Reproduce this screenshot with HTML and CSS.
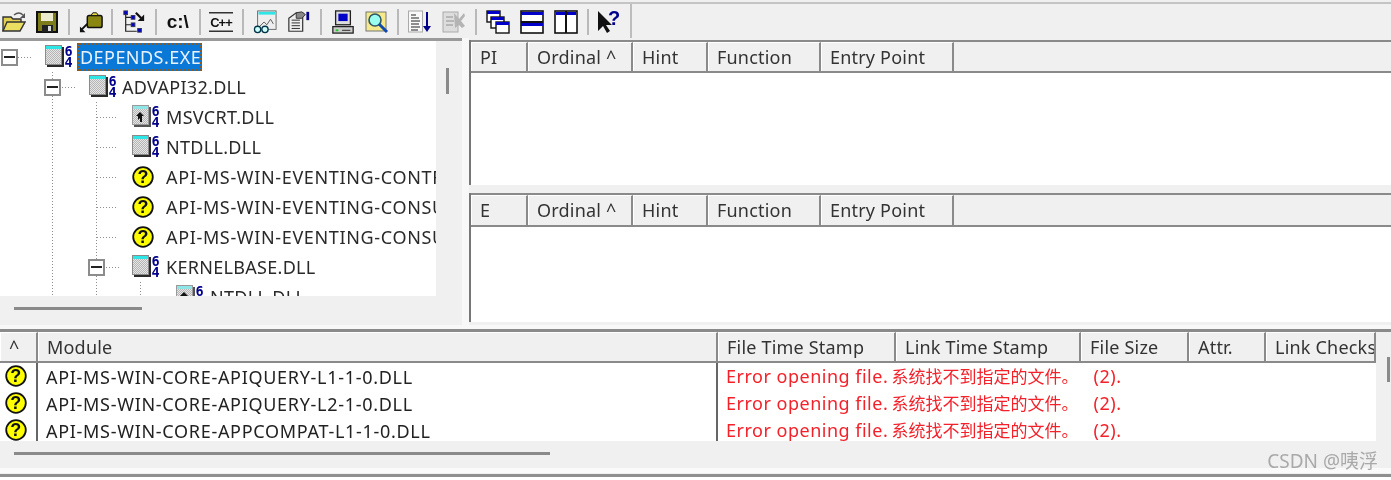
FILE: index.html
```html
<!DOCTYPE html>
<html lang="en">
<head>
<meta charset="utf-8">
<title>Dependency Walker</title>
<link rel="stylesheet" href="styles.css">
</head>
<body>
<svg class="defs" width="0" height="0">
  <defs>
    <pattern id="dither" width="2" height="2" patternUnits="userSpaceOnUse">
      <rect width="2" height="2" fill="#e6e6e6"/>
      <rect width="1" height="1" fill="#b4b4b4"/>
      <rect x="1" y="1" width="1" height="1" fill="#b4b4b4"/>
    </pattern>
    <symbol id="mod" viewBox="0 0 28 24">
      <rect x="2" y="2" width="17" height="20" fill="#2a2a2a"/>
      <rect x="0" y="0" width="17" height="20" fill="#8a8a8a"/>
      <rect x="1" y="1" width="15" height="18" fill="url(#dither)"/>
      <rect x="1" y="1" width="15" height="3" fill="#2fe6e6"/>
      <text x="19.500" y="10.500" class="bit">6</text>
      <text x="19.500" y="21.500" class="bit">4</text>
    </symbol>
    <symbol id="modfw" viewBox="0 0 28 24">
      <rect x="2" y="2" width="17" height="20" fill="#555"/>
      <rect x="0" y="0" width="17" height="20" fill="#9a9a9a"/>
      <rect x="1" y="1" width="15" height="18" fill="url(#dither)"/>
      <rect x="1" y="1" width="15" height="3" fill="#8fe6e6"/>
      <path d="M4 16l2-1v-4H4l4-4 4 4h-2v6H8v-4l-2 2z" fill="#111"/>
      <text x="19.500" y="10.500" class="bit">6</text>
      <text x="19.500" y="21.500" class="bit">4</text>
    </symbol>
    <symbol id="qm" viewBox="0 0 22 22">
      <circle cx="11" cy="11" r="9.8" fill="#ff0" stroke="#111" stroke-width="1.800"/>
      <text x="11" y="17" class="q">?</text>
    </symbol>
    <symbol id="open" viewBox="0 0 24 24">
      <path d="M1 21V7h8l2 2h8v3" fill="#e0cf50" stroke="#333" stroke-width="1.4"/>
      <path d="M1 21l4-9h18l-5 9z" fill="#eadf60" stroke="#333" stroke-width="1.4"/>
      <path d="M12 5q5-4 9 0" fill="none" stroke="#555" stroke-width="1.4"/>
      <path d="M23 3v5h-5z" fill="#555"/>
    </symbol>
    <symbol id="save" viewBox="0 0 24 24">
      <rect x="2" y="2" width="20" height="20" fill="#7d7b1a" stroke="#111" stroke-width="2"/>
      <rect x="6" y="3" width="12" height="8" fill="#ecebd0"/>
      <rect x="7" y="15" width="11" height="7" fill="#222"/>
      <rect x="13" y="16" width="3" height="5" fill="#ddd"/>
    </symbol>
    <symbol id="plug" viewBox="0 0 26 24">
      <rect x="9" y="5" width="16" height="13" rx="2" fill="#8a8612" stroke="#111" stroke-width="1.6"/>
      <path d="M13 5l2-3h4l2 3z" fill="#e8d840" stroke="#111"/>
      <path d="M9 14l-6 6" stroke="#111" stroke-width="2.2"/>
      <path d="M1 23v-6l6 6z" fill="#111"/>
    </symbol>
    <symbol id="tree" viewBox="0 0 26 26">
      <path d="M4 3v20h12M4 8h9M4 16h9" fill="none" stroke="#222" stroke-width="1.3"/>
      <rect x="2" y="1" width="4" height="4" fill="#00c" stroke="#335"/>
      <rect x="10" y="6" width="4" height="4" fill="#00c" stroke="#335"/>
      <rect x="10" y="14" width="4" height="4" fill="#00c" stroke="#335"/>
      <rect x="17" y="20" width="4" height="4" fill="#00c" stroke="#335"/>
      <path d="M15 3l6 6" stroke="#111" stroke-width="2.4"/>
      <path d="M24 12h-7l7-7z" fill="#111"/>
    </symbol>
    <symbol id="lines" viewBox="0 0 26 24">
      <path d="M0 2h26M0 22h26" stroke="#333" stroke-width="1.4"/>
      <text x="13" y="17" class="tbar">C++</text>
    </symbol>
    <symbol id="glasses" viewBox="0 0 26 26">
      <rect x="5" y="1" width="20" height="20" fill="#eee" stroke="#666"/>
      <rect x="6" y="2" width="18" height="3" fill="#2fe6e6"/>
      <path d="M7 18l5-5 3 3 4-6 3 5" fill="none" stroke="#555"/>
      <circle cx="5" cy="21" r="3.4" fill="#cff" stroke="#034" stroke-width="1.4"/>
      <circle cx="13" cy="21" r="3.4" fill="#cff" stroke="#034" stroke-width="1.4"/>
    </symbol>
    <symbol id="props" viewBox="0 0 26 26">
      <path d="M2 9l8-6h7v20H2z" fill="#eee" stroke="#333" stroke-width="1.3"/>
      <path d="M5 11h9M5 14h9M5 17h9M5 20h9" stroke="#222"/>
      <path d="M10 3l6-1 4 3-4 4h-6z" fill="#888" stroke="#333"/>
      <rect x="21" y="2" width="3" height="9" fill="#00008b"/>
    </symbol>
    <symbol id="pc" viewBox="0 0 24 26">
      <rect x="4" y="1" width="16" height="15" fill="#ddd" stroke="#222" stroke-width="1.4"/>
      <rect x="7" y="4" width="10" height="8" fill="#0000c8"/>
      <rect x="1" y="18" width="22" height="7" fill="#ccc" stroke="#222" stroke-width="1.4"/>
      <rect x="4" y="21" width="3" height="2" fill="#2c2"/>
      <path d="M11 22h9" stroke="#222"/>
    </symbol>
    <symbol id="find" viewBox="0 0 24 24">
      <rect x="1" y="2" width="20" height="19" fill="#f6e98a" stroke="#777"/>
      <circle cx="10" cy="10" r="6" fill="#9fe" stroke="#356" stroke-width="1.6"/>
      <path d="M14 14l8 8" stroke="#114aa8" stroke-width="3"/>
    </symbol>
    <symbol id="sort" viewBox="0 0 24 24">
      <rect x="0.500" y="1" width="14" height="21" fill="#f8f8f8" stroke="#aaa"/>
      <path d="M3 5h5M3 8h8M3 11h9M3 14h8M3 17h9M3 20h7" stroke="#222" stroke-width="1.2"/>
      <path d="M19 2v17" stroke="#00008b" stroke-width="2"/>
      <path d="M15 16h8l-4 6z" fill="#00008b"/>
    </symbol>
    <symbol id="grey" viewBox="0 0 24 24">
      <rect x="1" y="2" width="15" height="20" fill="#ddd" stroke="#aaa"/>
      <path d="M4 7h7M4 11h8M4 15h7" stroke="#aaa" stroke-width="1.4"/>
      <path d="M12 3l5 6 5-6 1 3-4 5 4 5-3 2-3-3-4 3z" fill="#b4b4b4"/>
    </symbol>
    <symbol id="cascade" viewBox="0 0 24 24">
      <g fill="#fff" stroke="#111" stroke-width="1.4">
        <rect x="1" y="1" width="13" height="11"/>
        <rect x="5" y="7" width="13" height="11"/>
        <rect x="10" y="12" width="13" height="11"/>
      </g>
      <path d="M1 2.500h13M5 8.500h13M10 13.500h13" stroke="#0000c8" stroke-width="3"/>
    </symbol>
    <symbol id="hsplit" viewBox="0 0 24 24">
      <rect x="1" y="1" width="22" height="22" fill="#fff" stroke="#111" stroke-width="1.6"/>
      <path d="M1 12h22" stroke="#111" stroke-width="2"/>
      <path d="M1 3.500h22M1 14.500h22" stroke="#0000c8" stroke-width="3"/>
    </symbol>
    <symbol id="vsplit" viewBox="0 0 24 24">
      <rect x="1" y="1" width="22" height="22" fill="#fff" stroke="#111" stroke-width="1.6"/>
      <path d="M12 1v22" stroke="#111" stroke-width="2"/>
      <path d="M2 3.500h9M13 3.500h9" stroke="#0000c8" stroke-width="3"/>
    </symbol>
    <symbol id="help" viewBox="0 0 24 24">
      <path d="M1 1v20l5-5 4 7 3-2-4-6h6z" fill="#111"/>
      <text x="17" y="15" class="hq">?</text>
    </symbol>
  </defs>
</svg>

<div class="app">
  <div class="toolbar-wrap">
    <div class="toolbar">
      <svg class="tool first"><use href="#open"/></svg>
      <svg class="tool"><use href="#save"/></svg>
      <span class="sep"></span>
      <svg class="tool"><use href="#plug"/></svg>
      <span class="sep"></span>
      <svg class="tool"><use href="#tree"/></svg>
      <span class="sep"></span>
      <span class="tool cpath">c:\</span>
      <span class="sep"></span>
      <svg class="tool"><use href="#lines"/></svg>
      <span class="sep"></span>
      <svg class="tool"><use href="#glasses"/></svg>
      <svg class="tool"><use href="#props"/></svg>
      <span class="sep"></span>
      <svg class="tool"><use href="#pc"/></svg>
      <svg class="tool"><use href="#find"/></svg>
      <span class="sep"></span>
      <svg class="tool"><use href="#sort"/></svg>
      <svg class="tool"><use href="#grey"/></svg>
      <span class="sep"></span>
      <svg class="tool"><use href="#cascade"/></svg>
      <svg class="tool"><use href="#hsplit"/></svg>
      <svg class="tool"><use href="#vsplit"/></svg>
      <span class="sep"></span>
      <svg class="tool"><use href="#help"/></svg>
    </div>
  </div>

  <div class="upper">
    <section class="tree-pane">
      <div class="tree-main">
        <div class="tree">
          <div class="row"><span class="unit exp"><i class="box"></i></span><svg class="ico"><use href="#mod"/></svg><span class="label sel">DEPENDS.EXE</span></div>
          <div class="row"><span class="unit"></span><span class="unit exp guide"><i class="box"></i></span><svg class="ico"><use href="#mod"/></svg><span class="label">ADVAPI32.DLL</span></div>
          <div class="row"><span class="unit"></span><span class="unit guide"></span><span class="unit branch"></span><svg class="ico"><use href="#modfw"/></svg><span class="label">MSVCRT.DLL</span></div>
          <div class="row"><span class="unit"></span><span class="unit guide"></span><span class="unit branch"></span><svg class="ico"><use href="#mod"/></svg><span class="label">NTDLL.DLL</span></div>
          <div class="row"><span class="unit"></span><span class="unit guide"></span><span class="unit branch"></span><svg class="ico q-ico"><use href="#qm"/></svg><span class="label wide">API-MS-WIN-EVENTING-CONTROLLER-L1-1-0.DLL</span></div>
          <div class="row"><span class="unit"></span><span class="unit guide"></span><span class="unit branch"></span><svg class="ico q-ico"><use href="#qm"/></svg><span class="label wide">API-MS-WIN-EVENTING-CONSUMER-L1-1-0.DLL</span></div>
          <div class="row"><span class="unit"></span><span class="unit guide"></span><span class="unit branch"></span><svg class="ico q-ico"><use href="#qm"/></svg><span class="label wide">API-MS-WIN-EVENTING-CONSUMER-L1-1-1.DLL</span></div>
          <div class="row"><span class="unit"></span><span class="unit guide"></span><span class="unit exp guide"><i class="box"></i></span><svg class="ico"><use href="#mod"/></svg><span class="label">KERNELBASE.DLL</span></div>
          <div class="row"><span class="unit"></span><span class="unit guide"></span><span class="unit guide"></span><span class="unit guide"></span><svg class="ico"><use href="#modfw"/></svg><span class="label">NTDLL.DLL</span></div>
        </div>
        <div class="vscroll"><span class="vthumb"></span></div>
      </div>
      <div class="hscroll"><span class="hthumb tree-thumb"></span></div>
    </section>
    <div class="splitter"></div>
    <section class="lists">
      <div class="list list-pi">
        <div class="head">
          <span class="th c-pi">PI</span><span class="th c-ord">Ordinal ^</span><span class="th c-hint">Hint</span><span class="th c-fn">Function</span><span class="th c-ep">Entry Point</span><span class="th-rest"></span>
        </div>
        <div class="body"></div>
      </div>
      <div class="list list-e">
        <div class="head">
          <span class="th c-pi">E</span><span class="th c-ord">Ordinal ^</span><span class="th c-hint">Hint</span><span class="th c-fn">Function</span><span class="th c-ep">Entry Point</span><span class="th-rest"></span>
        </div>
        <div class="body"></div>
      </div>
    </section>
  </div>

  <section class="modules">
    <div class="mod-main">
      <div class="mod-table">
        <div class="head mod-head">
          <span class="th m-flag">^</span><span class="th m-name">Module</span><span class="th m-fts">File Time Stamp</span><span class="th m-lts">Link Time Stamp</span><span class="th m-size">File Size</span><span class="th m-attr">Attr.</span><span class="th m-chk">Link Checksum</span>
        </div>
        <div class="mod-body">
          <div class="mrow"><span class="m-flag cell"><svg class="q-small"><use href="#qm"/></svg></span><span class="m-name cell">API-MS-WIN-CORE-APIQUERY-L1-1-0.DLL</span><span class="err cell">Error opening file. <span class="cjk">系统找不到指定的文件。</span> (2).</span></div>
          <div class="mrow"><span class="m-flag cell"><svg class="q-small"><use href="#qm"/></svg></span><span class="m-name cell">API-MS-WIN-CORE-APIQUERY-L2-1-0.DLL</span><span class="err cell">Error opening file. <span class="cjk">系统找不到指定的文件。</span> (2).</span></div>
          <div class="mrow"><span class="m-flag cell"><svg class="q-small"><use href="#qm"/></svg></span><span class="m-name cell">API-MS-WIN-CORE-APPCOMPAT-L1-1-0.DLL</span><span class="err cell">Error opening file. <span class="cjk">系统找不到指定的文件。</span> (2).</span></div>
        </div>
      </div>
      <div class="mod-gutter"><span class="vthumb mod-thumb"></span></div>
    </div>
    <div class="hscroll mod-hscroll"><span class="hthumb mod-hthumb"></span></div>
    <span class="watermark">CSDN @咦浮</span>
  </section>
  <div class="status"></div>
</div>
</body>
</html>
```
FILE: styles.css
```css
* { box-sizing: border-box; }
html, body { margin: 0; padding: 0; }
body {
  width: 1391px;
  height: 480px;
  overflow: hidden;
  background: #fff;
  font-family: "Noto Sans", "Noto Sans CJK SC", sans-serif;
  color: #222;
}
.defs { position: absolute; }
.bit { font: bold 13.500px "DejaVu Sans Mono", monospace; fill: #00008b; }
.q { font: bold 18px "Liberation Sans", sans-serif; fill: #111; text-anchor: middle; }
.tbar { font: bold 14px "Liberation Sans", sans-serif; fill: #111; text-anchor: middle; letter-spacing: -1px; }
.hq { font: bold 20px "Liberation Sans", sans-serif; fill: #00008b; text-anchor: middle; }

.app {
  height: 480px;
  display: flex;
  flex-direction: column;
  background: #f0f0f0;
  filter: blur(0.35px);
}

/* toolbar */
.toolbar-wrap {
  height: 38px;
  padding-top: 2px;
  background: #f0f0f0;
}
.toolbar {
  height: 36px;
  padding-top: 3px;
  padding-bottom: 2px;
  display: flex;
  align-items: center;
  border-top: 2px solid #c4c4c4;
  background: linear-gradient(#bdbdbd, #bdbdbd) 630px 0 / 2px 100% no-repeat;
}
.tool {
  width: 24px;
  height: 24px;
  margin: 0 5px;
  flex: none;
}
.tool.first { margin: 0 4px 0 2px; }
.cpath {
  font: bold 19px/24px "Liberation Sans", sans-serif;
  color: #111;
  text-align: center;
}
.sep {
  width: 2px;
  height: 26px;
  margin: 0 3.8px;
  background: #b9b9b9;
  flex: none;
}

/* upper panes */
.upper {
  height: 291px;
  display: flex;
  flex: none;
}
.tree-pane {
  width: 462px;
  height: 285px;
  border-top: 3px solid #9a9a9a;
  flex: none;
}
.tree-main { height: 255px; display: flex; }
.tree {
  width: 436px;
  height: 255px;
  background: #fff;
  overflow: hidden;
  flex: none;
}
.row {
  height: 30px;
  display: flex;
  align-items: center;
  white-space: nowrap;
}
.row:first-child { margin-top: 1px; }
.row:first-child .box { margin-left: 1px; }
.unit {
  width: 44px;
  height: 30px;
  flex: none;
  display: flex;
  align-items: center;
}
.guide {
  background: repeating-linear-gradient(#8f8f8f 0 1px, transparent 1px 3px) 8px 0 / 1px 100% no-repeat;
}
.branch {
  background:
    repeating-linear-gradient(#8f8f8f 0 1px, transparent 1px 3px) 8px 0 / 1px 100% no-repeat,
    repeating-linear-gradient(90deg, #8f8f8f 0 1px, transparent 1px 3px) 9px 15px / 20px 1px no-repeat;
}
.exp {
  background-image:
    repeating-linear-gradient(90deg, #8f8f8f 0 1px, transparent 1px 3px);
  background-position: 18px 15px;
  background-size: 15px 1px;
  background-repeat: no-repeat;
}
.exp.guide {
  background:
    repeating-linear-gradient(#8f8f8f 0 1px, transparent 1px 3px) 8px 0 / 1px 100% no-repeat,
    repeating-linear-gradient(90deg, #8f8f8f 0 1px, transparent 1px 3px) 18px 15px / 15px 1px no-repeat;
}
.box {
  width: 17px;
  height: 17px;
  border: 2px solid #8c8c8c;
  background: linear-gradient(#222, #222) center / 11px 2px no-repeat #fff;
}
.ico {
  width: 28px;
  height: 24px;
  margin-left: 0;
  margin-right: 3px;
  flex: none;
}
.row:nth-child(-n+2) .ico { margin-left: 1px; margin-right: 2px; }
.q-ico { width: 22px; height: 22px; margin-right: 9px; }
.label {
  font-size: 18px;
  line-height: 28px;
  height: 28px;
  padding: 0 3px;
  letter-spacing: 0.3px;
  color: #2a2a2a;
}
.wide { letter-spacing: 0.65px; }
.sel {
  margin-left: 2px;
  padding: 0 1px 0 3px;
  letter-spacing: 0.45px;
  background: #0a78d7;
  color: #e8f3ff;
  outline: 2px dotted #8a5a20;
  outline-offset: -2px;
}
.vscroll {
  width: 26px;
  padding: 27px 0 0 10px;
  flex: none;
}
.vthumb {
  display: block;
  width: 3px;
  height: 26px;
  background: #8a8a8a;
}
.hscroll {
  height: 27px;
  padding: 11px 0 0 14px;
}
.hthumb {
  display: block;
  height: 3px;
  background: #8a8a8a;
}
.tree-thumb { width: 128px; }
.splitter { width: 7px; flex: none; background: #f8f8f8; }

/* import / export lists */
.lists {
  flex: 1;
  display: flex;
  flex-direction: column;
}
.list { display: flex; flex-direction: column; border-left: 2px solid #777; }
.list-pi {
  height: 145px;
  margin-top: 2px;
  margin-bottom: 8px;
}
.list-e { height: 129px; }
.list .head { border-top: 2px solid #8a8a8a; }
.list-e .head { height: 34px; }
.head {
  height: 33px;
  display: flex;
  flex: none;
  border-bottom: 2px solid #8a8a8a;
}
.th {
  height: 100%;
  flex: none;
  padding-left: 8px;
  font-size: 18px;
  line-height: 28px;
  letter-spacing: 0.2px;
  white-space: nowrap;
  overflow: hidden;
  background: #f0f0f0;
  border-top: 1px solid #fff;
  border-left: 1px solid #fff;
  border-right: 2px solid #8a8a8a;
  color: #333;
}
.th-rest { flex: 1; background: #f0f0f0; }
.body { flex: 1; background: #fff; }
.c-pi { width: 57px; }
.c-ord { width: 105px; }
.c-hint { width: 75px; }
.c-fn { width: 113px; }
.c-ep { width: 133px; }

/* module list */
.modules {
  position: relative;
  height: 146px;
  flex: none;
  border-top: 3px solid #8a8a8a;
  box-shadow: 0 -4px 0 #f8f8f8;
}
.mod-main { height: 109px; display: flex; }
.mod-table { width: 1376px; flex: none; display: flex; flex-direction: column; }
.mod-head { height: 31px; }
.mod-body { flex: 1; background: #fff; overflow: hidden; }
.mrow { height: 27px; display: flex; align-items: center; }
.cell {
  height: 27px;
  line-height: 28px;
  flex: none;
  white-space: nowrap;
  font-size: 18px;
  letter-spacing: 0.7px;
}
.m-flag { width: 38px; }
.th.m-flag { padding-left: 8px; }
.m-name { width: 680px; }
.mrow .m-flag { border-right: 2px solid #666; padding: 2px 0 0 5px; }
.mrow .m-name { padding-left: 8px; border-right: 2px solid #666; }
.m-fts { width: 178px; }
.m-lts { width: 185px; }
.m-size { width: 108px; }
.m-attr { width: 77px; }
.m-chk { width: 110px; }
.q-small { width: 22px; height: 22px; display: block; }
.err { padding-left: 8px; line-height: 26px; letter-spacing: 0.5px; color: #f3212a; }
.cjk { font-size: 17px; letter-spacing: 0; margin-left: -2px; margin-right: 10px; }
.mod-gutter { flex: 1; padding: 25px 0 0 11px; }
.mod-thumb { height: 25px; }
.mod-hscroll { height: 32px; border-bottom: 5px solid #fafafa; }
.mod-hthumb { width: 536px; }
.watermark {
  position: absolute;
  right: 13px;
  top: 117px;
  font-size: 19px;
  line-height: 24px;
  color: #a9a9a9;
}
.status {
  flex: 1;
  background: #fff;
  border-top: 3px solid #8f8f8f;
  margin-top: -1px;
}
```
